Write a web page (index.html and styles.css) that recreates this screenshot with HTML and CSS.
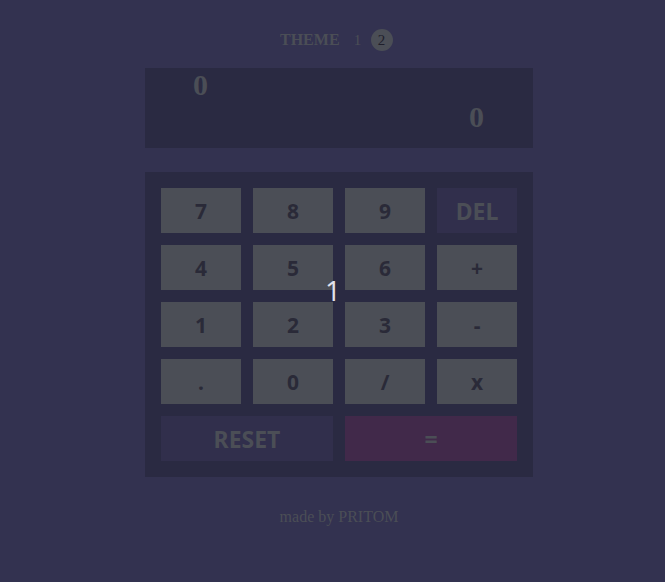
FILE: index.html
```html
<!DOCTYPE html>
<html>
<head>
<meta charset="utf-8">
<link rel="stylesheet" href="styles.css">
</head>
<body>
<div class="wrap">
  <div class="theme">
    <span class="theme-label">THEME</span>
    <span class="theme-opt">1</span>
    <span class="theme-opt active">2</span>
  </div>
  <div class="display">
    <div class="prev">0</div>
    <div class="cur">0</div>
  </div>
  <div class="keypad">
    <button class="key">7</button>
    <button class="key">8</button>
    <button class="key">9</button>
    <button class="key del">DEL</button>
    <button class="key">4</button>
    <button class="key">5</button>
    <button class="key">6</button>
    <button class="key">+</button>
    <button class="key">1</button>
    <button class="key">2</button>
    <button class="key">3</button>
    <button class="key">-</button>
    <button class="key">.</button>
    <button class="key">0</button>
    <button class="key">/</button>
    <button class="key">x</button>
    <button class="key reset wide">RESET</button>
    <button class="key equals wide">=</button>
    <span class="floating">1</span>
  </div>
  <div class="footer">made by PRITOM</div>
</div>
</body>
</html>
```

FILE: styles.css
```css
html, body {
  margin: 0;
  padding: 0;
  background: #333250;
}
body {
  width: 665px;
  height: 582px;
  overflow: hidden;
}
.wrap {
  width: 388px;
  margin-left: 145px;
  padding-top: 29px;
}
.theme {
  height: 22px;
  display: flex;
  align-items: center;
  justify-content: flex-start;
  padding-left: 135px;
  font-family: "Liberation Serif", serif;
  color: #4b4e56;
}
.theme-label {
  font-weight: bold;
  font-size: 16px;
  margin-right: 7px;
}
.theme-opt {
  width: 22px;
  height: 22px;
  border-radius: 50%;
  display: flex;
  align-items: center;
  justify-content: center;
  font-size: 15px;
}
.theme-opt.active {
  margin-left: 2px;
  background: #4b4e56;
  color: #1f1f2c;
}
.display {
  margin-top: 17px;
  height: 80px;
  background: #2a2a42;
  box-sizing: border-box;
  padding: 0 49px 0 48px;
  font-family: "Liberation Serif", serif;
  font-weight: bold;
  font-size: 30px;
  color: #4b4e56;
}
.prev {
  line-height: 33px;
}
.cur {
  text-align: right;
  line-height: 31px;
}
.keypad {
  position: relative;
  margin-top: 24px;
  background: #2a2a42;
  padding: 16px;
  display: grid;
  grid-template-columns: repeat(4, 80px);
  grid-auto-rows: 45px;
  gap: 12px;
}
.key {
  border: none;
  margin: 0;
  padding: 0;
  background: #4b4e56;
  color: #2a2a38;
  font-family: "Noto Sans", sans-serif;
  font-weight: bold;
  font-size: 21px;
  display: flex;
  align-items: center;
  justify-content: center;
}
.key.wide {
  grid-column: span 2;
}
.key.del, .key.reset {
  background: #312f4c;
  color: #4b4e56;
  font-size: 23px;
}
.key.equals {
  background: #41294a;
  color: #4b4e56;
  font-size: 23px;
}
.floating {
  position: absolute;
  left: 180px;
  top: 99px;
  font-family: "Open Sans", sans-serif;
  font-size: 28px;
  line-height: 38px;
  color: #e2e2ee;
}
.footer {
  margin-top: 31px;
  text-align: center;
  font-family: "Liberation Serif", serif;
  font-size: 16px;
  color: #4b4e56;
}
```
